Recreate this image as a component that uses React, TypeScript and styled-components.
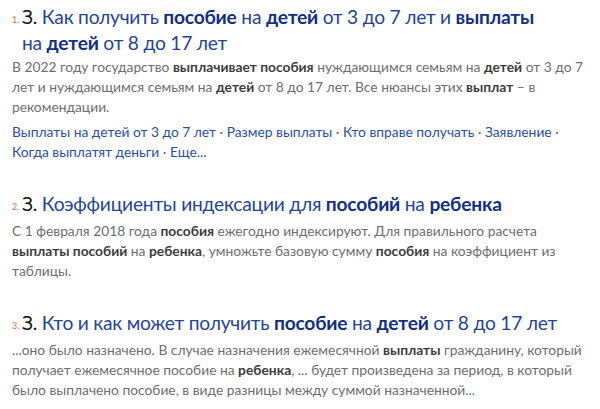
import React from "react";
import styled, { createGlobalStyle } from "styled-components";

const GlobalStyle = createGlobalStyle`
  html, body {
    margin: 0;
    padding: 0;
    background: #fff;
  }

  body {
    font-family: "Lato", "Noto Sans", sans-serif;
  }
`;

const Page = styled.div`
  padding: 4px 8px 0 12px;
`;

const Item = styled.div`
  margin-bottom: 29px;

  &:last-child {
    margin-bottom: 0;
  }
`;

const TitleRow = styled.div`
  display: flex;
  align-items: flex-start;
`;

const Num = styled.span`
  width: 10px;
  flex-shrink: 0;
  font-size: 9px;
  line-height: 26px;
  padding-top: 3px;
  color: #e8692c;
`;

const Title = styled.h3`
  margin: 0;
  font-size: 19.2px;
  letter-spacing: -0.22px;
  line-height: 26px;
  font-weight: 400;
  color: #1f43a3;
`;

const Mark = styled.span`
  color: #111;
`;

const TitleBold = styled.b`
  font-weight: 700;
  color: #102e8c;
`;

const Snippet = styled.p`
  margin: 1px 0 0;
  font-size: 13.8px;
  line-height: 20px;
  color: #6e6e6e;
`;

const SnippetBold = styled.b`
  font-weight: 700;
  color: #3c3c3c;
`;

const Links = styled.div`
  margin-top: 5px;
  font-size: 13.8px;
  line-height: 20px;
  color: #6e6e6e;
`;

const LinkItem = styled.a`
  color: #2850a8;
  text-decoration: none;
`;

const links = [
  "Выплаты на детей от 3 до 7 лет",
  "Размер выплаты",
  "Кто вправе получать",
  "Заявление",
  "Когда выплатят деньги",
  "Еще...",
];

const App: React.FC = () => {
  return (
    <Page>
      <GlobalStyle />

      <Item>
        <TitleRow>
          <Num>1.</Num>
          <Title>
            <Mark>З.</Mark> Как получить <TitleBold>пособие</TitleBold> на{" "}
            <TitleBold>детей</TitleBold> от 3 до 7 лет и{" "}
            <TitleBold>выплаты</TitleBold>
            <br />
            на <TitleBold>детей</TitleBold> от 8 до 17 лет
          </Title>
        </TitleRow>
        <Snippet>
          В 2022 году государство <SnippetBold>выплачивает пособия</SnippetBold>{" "}
          нуждающимся семьям на <SnippetBold>детей</SnippetBold> от 3 до 7 лет и
          нуждающимся семьям на <SnippetBold>детей</SnippetBold> от 8 до 17 лет.
          Все нюансы этих <SnippetBold>выплат</SnippetBold> – в рекомендации.
        </Snippet>
        <Links>
          {links.map((l, i) => (
            <React.Fragment key={l}>
              <LinkItem href="#">{l}</LinkItem>
              {i < links.length - 1 && " · "}
            </React.Fragment>
          ))}
        </Links>
      </Item>

      <Item>
        <TitleRow>
          <Num>2.</Num>
          <Title>
            <Mark>З.</Mark> Коэффициенты индексации для{" "}
            <TitleBold>пособий</TitleBold> на <TitleBold>ребенка</TitleBold>
          </Title>
        </TitleRow>
        <Snippet>
          С 1 февраля 2018 года <SnippetBold>пособия</SnippetBold> ежегодно
          индексируют. Для правильного расчета{" "}
          <SnippetBold>выплаты пособий</SnippetBold> на{" "}
          <SnippetBold>ребенка</SnippetBold>, умножьте базовую сумму{" "}
          <SnippetBold>пособия</SnippetBold> на коэффициент из таблицы.
        </Snippet>
      </Item>

      <Item>
        <TitleRow>
          <Num>3.</Num>
          <Title>
            <Mark>З.</Mark> Кто и как может получить{" "}
            <TitleBold>пособие</TitleBold> на <TitleBold>детей</TitleBold> от 8
            до 17 лет
          </Title>
        </TitleRow>
        <Snippet>
          ...оно было назначено. В случае назначения ежемесячной{" "}
          <SnippetBold>выплаты</SnippetBold> гражданину, который получает
          ежемесячное пособие на <SnippetBold>ребенка</SnippetBold>, ... будет
          произведена за период, в который было выплачено пособие, в виде
          разницы между суммой назначенной...
        </Snippet>
      </Item>
    </Page>
  );
};

export default App;
